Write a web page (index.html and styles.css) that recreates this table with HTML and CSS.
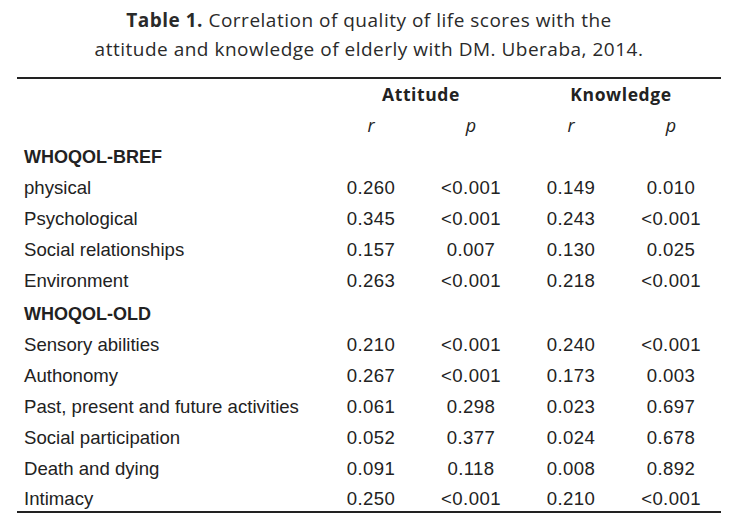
FILE: index.html
```html
<!DOCTYPE html>
<html lang="en">
<head>
<meta charset="utf-8">
<title>Table 1</title>
<link rel="stylesheet" href="styles.css">
</head>
<body>
<div class="page">
  <h1 class="caption"><b>Table 1.</b> Correlation of quality of life scores with the<br>attitude and knowledge of elderly with DM. Uberaba, 2014.</h1>
  <table class="data">
    <colgroup>
      <col class="c-label">
      <col class="c-num"><col class="c-num"><col class="c-num"><col class="c-num">
    </colgroup>
    <thead>
      <tr class="groups">
        <th></th>
        <th colspan="2">Attitude</th>
        <th colspan="2">Knowledge</th>
      </tr>
      <tr class="stats">
        <th></th>
        <th>r</th><th>p</th><th>r</th><th>p</th>
      </tr>
    </thead>
    <tbody>
      <tr class="section"><td colspan="5">WHOQOL-BREF</td></tr>
      <tr><td>physical</td><td>0.260</td><td>&lt;0.001</td><td>0.149</td><td>0.010</td></tr>
      <tr><td>Psychological</td><td>0.345</td><td>&lt;0.001</td><td>0.243</td><td>&lt;0.001</td></tr>
      <tr><td>Social relationships</td><td>0.157</td><td>0.007</td><td>0.130</td><td>0.025</td></tr>
      <tr><td>Environment</td><td>0.263</td><td>&lt;0.001</td><td>0.218</td><td>&lt;0.001</td></tr>
      <tr class="section"><td colspan="5">WHOQOL-OLD</td></tr>
      <tr><td>Sensory abilities</td><td>0.210</td><td>&lt;0.001</td><td>0.240</td><td>&lt;0.001</td></tr>
      <tr><td>Authonomy</td><td>0.267</td><td>&lt;0.001</td><td>0.173</td><td>0.003</td></tr>
      <tr><td>Past, present and future activities</td><td>0.061</td><td>0.298</td><td>0.023</td><td>0.697</td></tr>
      <tr><td>Social participation</td><td>0.052</td><td>0.377</td><td>0.024</td><td>0.678</td></tr>
      <tr><td>Death and dying</td><td>0.091</td><td>0.118</td><td>0.008</td><td>0.892</td></tr>
      <tr><td>Intimacy</td><td>0.250</td><td>&lt;0.001</td><td>0.210</td><td>&lt;0.001</td></tr>
    </tbody>
  </table>
</div>
</body>
</html>
```
FILE: styles.css
```css
html, body {
  margin: 0;
  padding: 0;
  background: #ffffff;
}

.page {
  padding: 6px 14px 0 17px;
  color: #222222;
}

.caption {
  margin: 0 0 13px 0;
  font-family: "Open Sans", "Liberation Sans", sans-serif;
  font-size: 19px;
  font-weight: 400;
  letter-spacing: 0.5px;
  line-height: 29px;
  text-align: center;
  color: #2a2a2a;
}

.caption b {
  font-weight: 700;
}

.data {
  width: 704px;
  border-collapse: collapse;
  table-layout: fixed;
  border-top: 2px solid #222222;
  border-bottom: 2px solid #222222;
  font-family: "Liberation Sans", Arial, sans-serif;
  font-size: 18.6px;
}

.c-label { width: 304px; }
.c-num { width: 100px; }

.data th,
.data td {
  box-sizing: border-box;
  padding: 0;
  height: 31px;
  vertical-align: middle;
  text-align: center;
  white-space: nowrap;
  line-height: 20px;
}

.data tbody td {
  padding-top: 3px;
}

.data tbody tr:nth-child(n+6) td {
  padding-top: 6px;
}

.data td:first-child {
  text-align: left;
  padding-left: 7px;
}

.data tbody td + td {
  letter-spacing: 0.4px;
}

.groups th {
  font-family: "Open Sans", "Liberation Sans", sans-serif;
  font-weight: 700;
  font-size: 17.5px;
  letter-spacing: 0.6px;
}

.stats th {
  font-family: "Open Sans", "Liberation Sans", sans-serif;
  font-style: italic;
  font-weight: 400;
  font-size: 18px;
}

.section td {
  font-weight: 700;
  font-size: 18px;
}
```
